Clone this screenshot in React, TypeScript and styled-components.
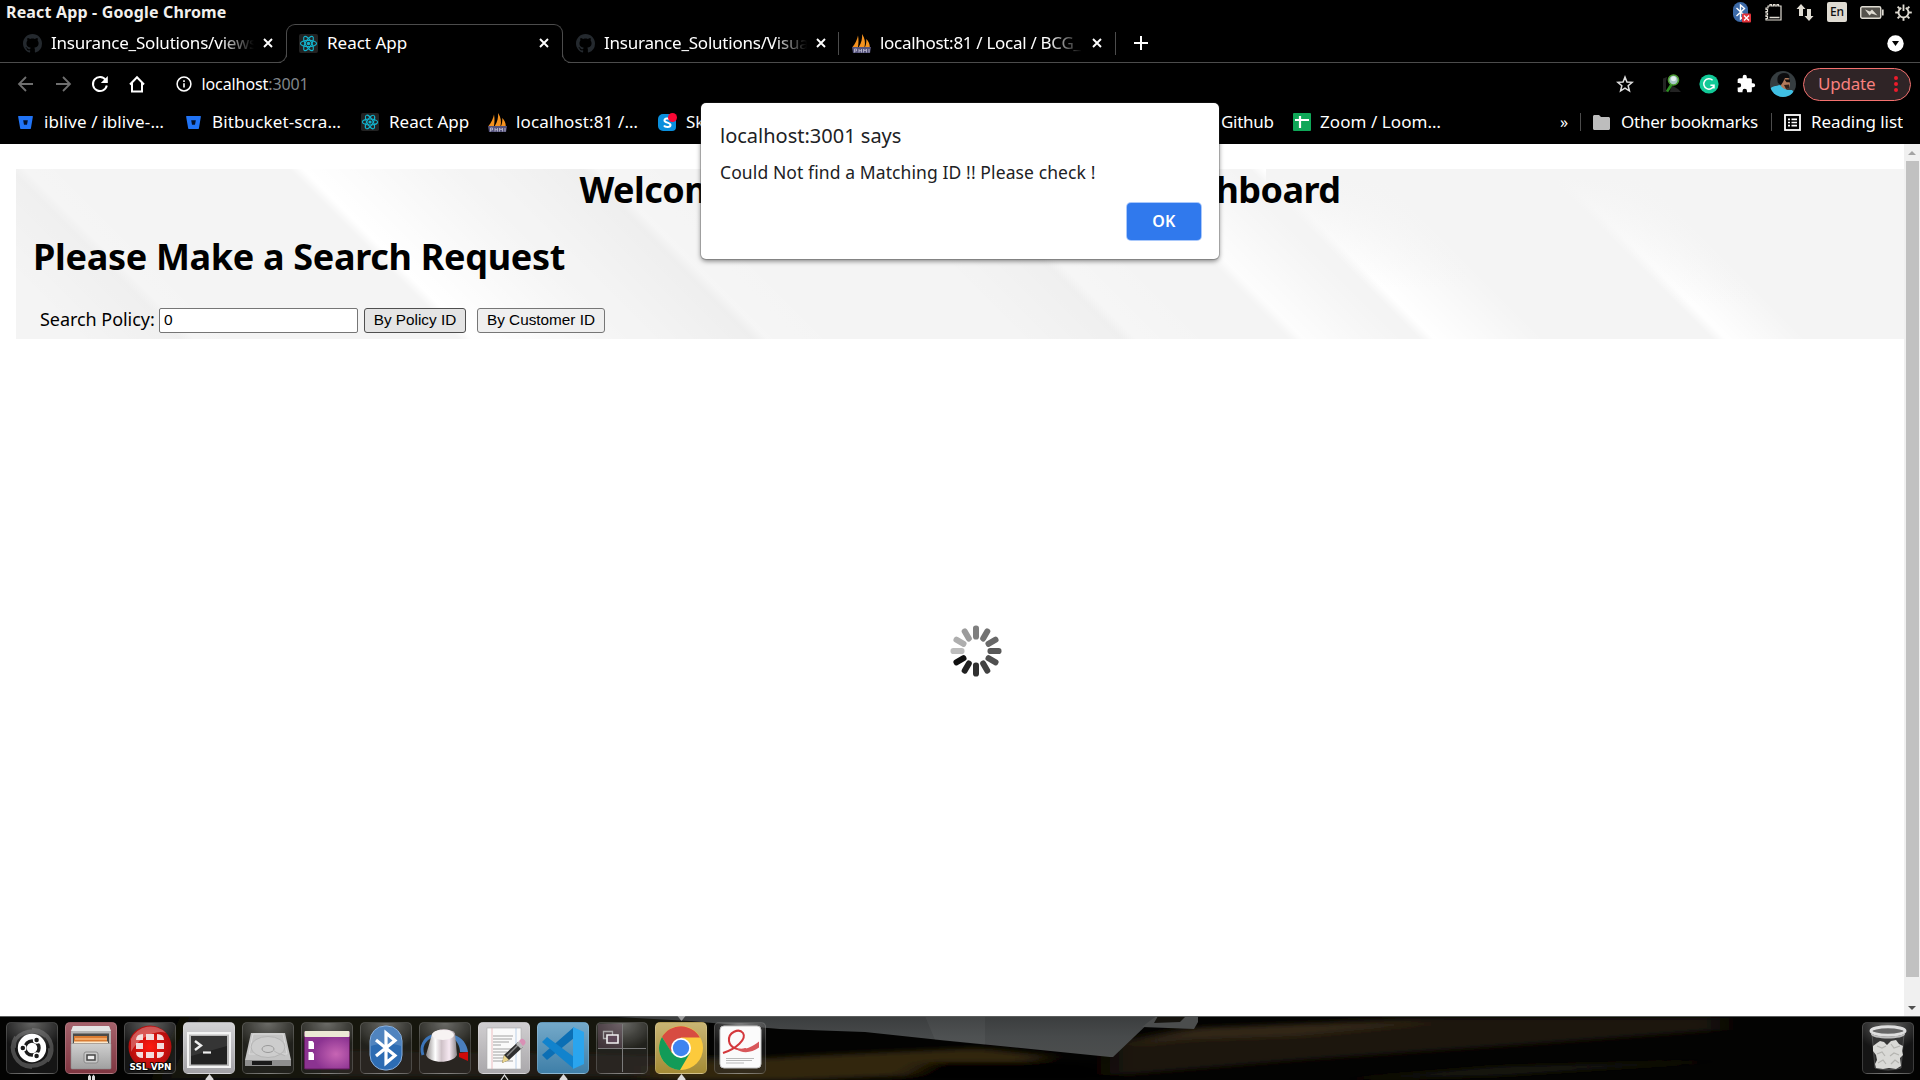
import React from "react";
import styled, { createGlobalStyle, css } from "styled-components";

const ui = `"Noto Sans", "Open Sans", sans-serif`;

const GlobalStyle = createGlobalStyle`
  *, *::before, *::after { box-sizing: border-box; }
  html, body { margin: 0; padding: 0; background: #fff; overflow: hidden; }
  svg { display: block; flex: none; }
  button, input { margin: 0; }
`;

/* ---------- shell ---------- */

const Desktop = styled.div`
  position: relative;
  display: flex;
  flex-direction: column;
  width: 1920px;
  height: 1080px;
  overflow: hidden;
  font-family: ${ui};
  color: #fff;
  background: #000;
`;

const Label = styled.span<{ $w?: number; $ls?: number; $size?: number; $fade?: boolean; $color?: string }>`
  flex: none;
  display: block;
  white-space: nowrap;
  overflow: hidden;
  line-height: 26px;
  font-size: ${(p) => p.$size ?? 17}px;
  letter-spacing: ${(p) => p.$ls ?? 0}px;
  color: ${(p) => p.$color ?? "inherit"};
  ${(p) => p.$w && css`width: ${p.$w}px;`}
  ${(p) => p.$fade && css`
    mask-image: linear-gradient(to right, #000 calc(100% - 34px), transparent);
  `}
`;

const SystemBar = styled.header`
  flex: none;
  display: flex;
  align-items: center;
  justify-content: space-between;
  height: 24px;
  padding: 0 4px 0 6px;
`;

const WindowTitle = styled.span`
  font-size: 16px;
  font-weight: 700;
  letter-spacing: 0.16px;
  line-height: 24px;
  white-space: nowrap;
  color: #f2f0ed;
`;

const Tray = styled.div`
  display: flex;
  align-items: center;
`;

const TrayItem = styled.div<{ $w: number }>`
  display: flex;
  justify-content: center;
  width: ${(p) => p.$w}px;
`;

const Lang = styled.span`
  width: 20px;
  height: 20px;
  border-radius: 2px;
  background: #dfdbd2;
  color: #111;
  font-size: 12px;
  line-height: 20px;
  text-align: center;
  font-weight: 500;
`;

/* ---------- tabs ---------- */

const TabStrip = styled.div`
  flex: none;
  display: flex;
  height: 39px;
`;

const Tab = styled.div<{ $w: number; $pl: number }>`
  flex: none;
  display: flex;
  align-items: center;
  width: ${(p) => p.$w}px;
  padding-left: ${(p) => p.$pl}px;
  border-bottom: 1px solid #4c4c4c;
`;

const ActiveTab = styled(Tab)`
  position: relative;
  padding-bottom: 2px;
  border: 1px solid #4c4c4c;
  border-bottom: 0;
  border-radius: 9px 9px 0 0;
  &::before, &::after {
    content: "";
    position: absolute;
    bottom: 0;
    width: 10px;
    height: 10px;
    border-bottom: 1px solid #4c4c4c;
  }
  &::before {
    left: -10px;
    border-right: 1px solid #4c4c4c;
    border-bottom-right-radius: 9px;
    box-shadow: 4px 4px 0 #000;
  }
  &::after {
    right: -10px;
    border-left: 1px solid #4c4c4c;
    border-bottom-left-radius: 9px;
    box-shadow: -4px 4px 0 #000;
  }
`;

const Favicon = styled.span<{ $mr?: number }>`
  flex: none;
  margin-right: ${(p) => p.$mr ?? 9}px;
`;

const TabClose = styled.span<{ $ml: number }>`
  flex: none;
  margin-left: ${(p) => p.$ml}px;
`;

const Divider = styled.i<{ $h?: number; $ml?: number; $mr?: number }>`
  flex: none;
  width: 1px;
  height: ${(p) => p.$h ?? 20}px;
  margin: 0 ${(p) => p.$mr ?? 0}px 0 ${(p) => p.$ml ?? 0}px;
  background: #4c4c4c;
`;

const StripEnd = styled.div`
  flex: 1;
  display: flex;
  align-items: center;
  justify-content: space-between;
  padding: 0 16px 0 17px;
  border-bottom: 1px solid #4c4c4c;
`;

/* ---------- toolbar ---------- */

const Toolbar = styled.div`
  flex: none;
  display: flex;
  align-items: center;
  height: 43px;
  padding: 0 9px 1px 16px;
`;

const NavButtons = styled.div`
  display: flex;
  align-items: center;
  gap: 18.500px;
`;

const Address = styled.div`
  flex: 1;
  display: flex;
  align-items: center;
  padding-left: 30px;
  font-size: 16px;
  letter-spacing: -0.1px;
  line-height: 26px;
  svg { margin-right: 10px; }
`;

const Port = styled.span`
  color: #80868b;
`;

const Extensions = styled.div`
  display: flex;
  align-items: center;
`;

const Slot = styled.div<{ $w: number }>`
  display: flex;
  justify-content: center;
  width: ${(p) => p.$w}px;
`;

const UpdatePill = styled.div`
  display: flex;
  align-items: center;
  width: 108px;
  height: 33px;
  margin-left: 2px;
  padding-left: 14px;
  border: 1px solid #f4716f;
  border-radius: 17px;
  background: #2f2426;
  svg { margin-left: 14px; }
`;

/* ---------- bookmarks ---------- */

const Bookmarks = styled.div`
  flex: none;
  display: flex;
  align-items: center;
  height: 38px;
  padding: 0 0 6px 18px;
`;

const Bookmark = styled.div<{ $w: number; $gap?: number }>`
  flex: none;
  display: flex;
  align-items: center;
  gap: ${(p) => p.$gap ?? 9}px;
  width: ${(p) => p.$w}px;
`;

/* ---------- page ---------- */

const Viewport = styled.div`
  flex: none;
  display: flex;
  height: 872px;
  background: #fff;
  color: #000;
`;

const Page = styled.main`
  flex: 1;
  display: flex;
  flex-direction: column;
  padding: 25px 0 0 16px;
`;

const streak = (u: number, glow: string, dark: string, spread: number) => {
  const at = (x: number) => ((x / 2058) * 100).toFixed(2) + "%";
  return `linear-gradient(45deg, rgba(0,0,0,0) ${at(u - 110)}, ${dark} ${at(u - 5)}, ${glow} ${at(u + 9)}, rgba(255,255,255,0) ${at(u + spread)})`;
};

const Banner = styled.section`
  flex: none;
  height: 170px;
  background:
    ${streak(170, "rgba(255,255,255,.1)", "rgba(0,0,0,.018)", 60)},
    ${streak(448, "rgba(255,255,255,1)", "rgba(0,0,0,0)", 170)},
    ${streak(742, "rgba(255,255,255,.15)", "rgba(0,0,0,.022)", 90)},
    ${streak(1111, "rgba(255,255,255,.2)", "rgba(0,0,0,.018)", 90)},
    ${streak(1278, "rgba(255,255,255,.8)", "rgba(0,0,0,0)", 110)},
    linear-gradient(to bottom, #f4f4f4 5%, rgba(244,244,244,0) 70%) 1250px 0 / 200px 170px no-repeat,
    ${streak(1409, "rgba(255,255,255,1)", "rgba(0,0,0,0)", 120)},
    linear-gradient(to bottom, #f4f4f4 5%, rgba(244,244,244,0) 80%) 1500px 0 / 240px 170px no-repeat,
    ${streak(1701, "rgba(255,255,255,.95)", "rgba(0,0,0,0)", 90)},
    #f4f4f4;
`;

const Heading = styled.h1<{ $center?: boolean; $ls: number }>`
  margin: ${(p) => (p.$center ? "0" : "28px 0 0 17px")};
  font-size: 36px;
  font-weight: 700;
  line-height: 39px;
  letter-spacing: ${(p) => p.$ls}px;
  white-space: nowrap;
  text-align: ${(p) => (p.$center ? "center" : "left")};
  &:first-child { padding-top: 1px; }
`;

const SearchRow = styled.form`
  display: flex;
  align-items: center;
  height: 26px;
  margin-top: 31px;
  padding-left: 24px;
`;

const SearchLabel = styled.label`
  width: 119px;
  font-size: 18px;
  line-height: 22px;
  letter-spacing: -0.05px;
  white-space: nowrap;
  padding-bottom: 3px;
`;

const SearchInput = styled.input`
  width: 199px;
  height: 25px;
  padding: 1px 4px;
  border: 1px solid #767676;
  border-radius: 2px;
  outline: 0;
  background: #fff;
  color: #000;
  font: 15.5px "Liberation Sans", Arial, sans-serif;
`;

const SearchButton = styled.button<{ $w: number; $ml: number; $pressed?: boolean }>`
  width: ${(p) => p.$w}px;
  height: 25px;
  margin-left: ${(p) => p.$ml}px;
  padding: 0;
  border: 1px solid ${(p) => (p.$pressed ? "#4f4f4f" : "#767676")};
  border-radius: 3px;
  background: ${(p) => (p.$pressed ? "#e4e4e4" : "#efefef")};
  color: #000;
  font: 15.3px "Liberation Sans", Arial, sans-serif;
  white-space: nowrap;
`;

const Loading = styled.div`
  flex: 1;
  display: flex;
  justify-content: center;
  padding: 286px 0 0 32px;
`;

const Scrollbar = styled.div`
  flex: none;
  display: flex;
  flex-direction: column;
  align-items: center;
  justify-content: space-between;
  width: 16px;
  padding: 7px 0 6px;
  background: #f0f0f0;
`;

const Thumb = styled.div`
  width: 13px;
  height: 816px;
  margin: 6px 0 auto 1px;
  background: #c1c1c1;
`;

/* ---------- alert ---------- */

const Alert = styled.div`
  position: absolute;
  left: 701px;
  top: 103px;
  display: flex;
  flex-direction: column;
  width: 518px;
  height: 156px;
  padding: 19px 18px 18px 19px;
  border-radius: 5px;
  background: #fff;
  color: #202124;
  box-shadow: 0 0 0 1px rgba(60, 60, 60, 0.25), 0 2px 5px rgba(0, 0, 0, 0.5);
`;

const AlertTitle = styled.div`
  font-size: 20px;
  line-height: 28px;
`;

const AlertText = styled.div`
  margin-top: 8px;
  font-size: 17.5px;
  letter-spacing: 0.1px;
  line-height: 28px;
`;

const OkButton = styled.button`
  align-self: flex-end;
  width: 74px;
  height: 37px;
  margin-top: 17px;
  padding: 0 0 1px;
  border: 0;
  border-radius: 4px;
  background: #3079ed;
  box-shadow: 0 0 0 1px #a9c8fb;
  color: #fff;
  font: 600 16px ${ui};
  letter-spacing: 0.4px;
`;

/* ---------- dock ---------- */

const Dock = styled.footer`
  position: relative;
  flex: none;
  display: flex;
  align-items: flex-start;
  gap: 7px;
  height: 64px;
  padding: 6px 6px 0;
  overflow: hidden;
  background: #030302;
`;

const Wallpaper = styled.svg`
  position: absolute;
  inset: 0;
`;

const Tile = styled.div<{ $bg?: string; $last?: boolean }>`
  position: relative;
  flex: none;
  width: 52px;
  height: 52px;
  border: 1px solid rgba(255, 255, 255, 0.17);
  border-radius: 5px;
  background: ${(p) => p.$bg ?? "radial-gradient(ellipse 70% 55% at 50% 0, rgba(255,255,255,.36), rgba(255,255,255,.04)), rgba(30,30,28,.35)"};
  ${(p) => p.$last && css`margin-left: auto;`}
  & > svg { margin: -1px; }
`;

const Marker = styled.span<{ $top?: boolean }>`
  position: absolute;
  left: 21px;
  ${(p) => (p.$top ? "top: -8px; transform: rotate(180deg);" : "top: 51px;")}
  svg { opacity: ${(p) => (p.$top ? 0.6 : 1)}; }
`;

const Arrow = ({ top, kind = "solid" }: { top?: boolean; kind?: "solid" | "hollow" | "twin" }) => (
  <Marker $top={top}>
    <svg width="9" height="6" viewBox="0 0 9 6">
      {kind === "solid" && <path d="M4.5 0 8.5 5v1h-8V5Z" fill="#d9d9d9" />}
      {kind === "hollow" && <path d="M1 6 4.500 1 8 6" fill="none" stroke="#d9d9d9" strokeWidth="1.300" />}
      {kind === "twin" && <path d="M1 6V2.500L2.500.500 4 2.500V6ZM5 6V2.500L6.500.500 8 2.500V6Z" fill="#d9d9d9" />}
    </svg>
  </Marker>
);

/* ---------- icons ---------- */

const GithubIcon = () => (
  <svg width="19" height="19" viewBox="0 0 16 16">
    <path fill="#24292e" d="M8 0C3.580 0 0 3.580 0 8c0 3.540 2.290 6.530 5.470 7.590.4.070.55-.17.55-.38 0-.19-.010-.82-.010-1.490-2.010.37-2.530-.49-2.690-.94-.09-.23-.48-.94-.82-1.130-.28-.15-.68-.52-.010-.53.63-.010 1.080.58 1.230.82.72 1.210 1.870.87 2.330.66.070-.52.28-.87.51-1.070-1.780-.2-3.640-.89-3.640-3.950 0-.87.31-1.590.82-2.150-.080-.2-.36-1.020.080-2.120 0 0 .67-.21 2.200.82.64-.18 1.320-.27 2-.27s1.360.09 2 .27c1.530-1.040 2.200-.82 2.200-.82.44 1.100.16 1.920.080 2.120.51.56.82 1.270.82 2.150 0 3.070-1.870 3.750-3.650 3.950.29.25.54.73.54 1.480 0 1.070-.010 1.930-.010 2.200 0 .21.15.46.55.38A8.010 8.010 0 0 0 16 8c0-4.420-3.580-8-8-8Z" />
  </svg>
);

const ReactIcon = ({ size = 19 }: { size?: number }) => (
  <svg width={size} height={size} viewBox="0 0 20 20">
    <rect width="20" height="20" rx="2" fill="#222" />
    <g fill="none" stroke="#12b3cd" strokeWidth="1.200">
      <ellipse cx="10" cy="10" rx="8.500" ry="3.300" />
      <ellipse cx="10" cy="10" rx="8.500" ry="3.300" transform="rotate(60 10 10)" />
      <ellipse cx="10" cy="10" rx="8.500" ry="3.300" transform="rotate(120 10 10)" />
    </g>
    <circle cx="10" cy="10" r="1.800" fill="#12b3cd" />
  </svg>
);

const SailIcon = () => (
  <svg width="19" height="19" viewBox="0 0 19 19">
    <path d="M.5 13C3 10 5.500 5 6 1.500c.8 4 .6 8 0 11.500ZM6.800 13C9.500 9 10.500 4 10 0c3 4 3.500 9 2.500 13ZM13 13c1-2 1.500-4.500 1.300-8 2.200 2 3.500 5 3.500 8Z" fill="#f5921f" />
    <path d="M0 13h19l-1 6H1Z" fill="#55537c" />
    <path d="M2.500 18.500V15h2v2h-2M7 18.500V15M7 16.700h2.500m0-1.700v3.500M11.500 18.500V15l1.500 2 1.500-2v3.500m2.500 0V15" stroke="#b9b7cc" strokeWidth=".9" fill="none" />
  </svg>
);

const BitbucketIcon = () => (
  <svg width="15" height="15" viewBox="0 0 15 15">
    <path d="M.6 1h13.800c.3 0 .5.3.5.6l-2 12c0 .3-.3.500-.6.500H2.800c-.3 0-.6-.2-.6-.500L.1 1.600C0 1.300.3 1 .6 1Z" fill="#2174f6" />
    <path d="M5.200 5.300h4.600l-.8 4.500H6Z" fill="#03102a" />
  </svg>
);

const SkypeIcon = () => (
  <svg width="19" height="19" viewBox="0 0 19 19">
    <path d="M5 1h9a4 4 0 0 1 4 4v9a4 4 0 0 1-4 4H5a5 5 0 0 1-5-5V6a5 5 0 0 1 5-5Z" fill="#0a8fdd" />
    <path d="M12 6.500C11 5 6.500 5 6.500 7.500S12.500 9.300 12.500 12 7 14.500 6 12.500" fill="none" stroke="#fff" strokeWidth="2" />
    <circle cx="14.500" cy="4.500" r="4.500" fill="#fb0734" />
  </svg>
);

const SheetsIcon = () => (
  <svg width="18" height="18" viewBox="0 0 18 18">
    <rect width="18" height="18" rx="1" fill="#0fa758" />
    <path d="M2 7h14M7 3v12" stroke="#fff" strokeWidth="2.200" />
  </svg>
);

const CloseIcon = () => (
  <svg width="10" height="10" viewBox="0 0 10 10">
    <path d="m1 1 8 8M9 1 1 9" stroke="#fff" strokeWidth="1.900" />
  </svg>
);

const ArrowIcon = ({ flip }: { flip?: boolean }) => (
  <svg width="19" height="16" viewBox="0 0 19 16">
    <path d="M17 8H3m7-7L3 8l7 7" transform={flip ? "rotate(180 9.500 8)" : undefined} fill="none" stroke="#6f6f6f" strokeWidth="1.800" />
  </svg>
);

const ReloadIcon = () => (
  <svg width="18" height="18" viewBox="0 0 18 18">
    <path d="M14.700 5A7 7 0 1 0 15.800 10.500" fill="none" stroke="#fff" strokeWidth="2" />
    <path d="M16.800 1v7h-7Z" fill="#fff" />
  </svg>
);

const HomeIcon = () => (
  <svg width="18" height="18" viewBox="0 0 18 18">
    <path d="M2 9.500 9 2.300l7 7.200M4 8v8.500h10V8" fill="none" stroke="#fff" strokeWidth="2" />
  </svg>
);

const InfoIcon = () => (
  <svg width="16" height="16" viewBox="0 0 16 16">
    <circle cx="8" cy="8" r="6.900" fill="none" stroke="#fff" strokeWidth="1.500" />
    <path d="M8 7.300v4.300M8 4.300v1.600" stroke="#fff" strokeWidth="1.600" />
  </svg>
);

const StarIcon = () => (
  <svg width="18" height="18" viewBox="0 0 24 24">
    <path d="m12 2.800 2.600 6.500 7 .5-5.400 4.500 1.700 6.800-5.900-3.700-5.900 3.700 1.700-6.800L2.400 9.800l7-.5Z" fill="none" stroke="#dedede" strokeWidth="2" />
  </svg>
);

const LensIcon = () => (
  <svg width="20" height="20" viewBox="0 0 20 20">
    <path d="M1 4.500 5 3l-1 4v10l3 1H1ZM9 11l7 4 3 3H8Z" fill="#232323" />
    <path d="m9.500 10.500-4.500 7" stroke="#2c8f22" strokeWidth="2.600" />
    <circle cx="11.500" cy="6" r="5" fill="#a9c6c8" stroke="#4c9b34" strokeWidth="1.600" />
    <circle cx="11.500" cy="4.700" r="2.500" fill="#e3f0f0" />
  </svg>
);

const GrammarlyIcon = () => (
  <svg width="20" height="20" viewBox="0 0 20 20">
    <circle cx="10" cy="10" r="9.600" fill="#11c997" />
    <path d="M13.600 6.200A5.200 5.200 0 1 0 15 11.200h-3.600M15 11v3.500" fill="none" stroke="#fff" strokeWidth="1.500" />
  </svg>
);

const PuzzleIcon = () => (
  <svg width="20" height="20" viewBox="0 0 24 24">
    <path fill="#fff" d="M20.500 11H19V7c0-1.100-.9-2-2-2h-4V3.500a2.500 2.500 0 0 0-5 0V5H4c-1.100 0-2 .9-2 2v3.800h1.500a2.700 2.700 0 0 1 0 5.400H2V20c0 1.100.9 2 2 2h3.800v-1.500a2.700 2.700 0 0 1 5.400 0V22H17c1.100 0 2-.9 2-2v-4h1.500a2.500 2.500 0 0 0 0-5Z" />
  </svg>
);

const Avatar = () => (
  <svg width="26" height="26" viewBox="0 0 26 26">
    <defs><clipPath id="face"><circle cx="13" cy="13" r="13" /></clipPath></defs>
    <g clipPath="url(#face)">
      <rect width="26" height="26" fill="#363d40" />
      <path d="M0 26V18c2-3 6-3 10-4l7 5 5 0c2 2 3 4 3 7Z" fill="#3fbfe3" />
      <path d="M11 7c2-4 8-3 8 2l1 4-1 4c-2 2-5 2-8-2Z" fill="#b27a5b" />
      <path d="M8 12C6 6 9 2 14 2c4 0 6 2 5.500 5L15 7l-2 4-2 3Z" fill="#0c0c0e" />
      <path d="M14.500 8.500H20v2.800h-3.500Z" fill="#17110f" />
      <path d="m14 14 5-.5v4l-3 .5Z" fill="#332019" />
    </g>
  </svg>
);

const FolderIcon = () => (
  <svg width="17" height="15" viewBox="0 0 17 15">
    <path d="M0 1.500C0 .7.7 0 1.500 0H6l2 2h7.500c.8 0 1.500.7 1.500 1.500v10c0 .8-.7 1.500-1.500 1.500h-14C.7 15 0 14.300 0 13.500Z" fill="#bdbdbd" />
  </svg>
);

const ListIcon = () => (
  <svg width="17" height="17" viewBox="0 0 17 17">
    <rect x="1" y="1" width="15" height="15" fill="none" stroke="#fff" strokeWidth="1.800" />
    <path d="M4 5.300h2m1.500 0H13M4 8.500h2m1.500 0H13M4 11.700h2m1.500 0H13" stroke="#fff" strokeWidth="1.700" />
  </svg>
);

const Spinner = () => {
  const shades = ["#7f7f7f", "#727272", "#686868", "#585858", "#4f4f4f", "#424242", "#303030", "#202020", "#0f0f0f", "#bdbdbd", "#aeaeae", "#9b9b9b"];
  return (
    <svg width="52" height="52" viewBox="-26 -26 52 52">
      {shades.map((c, i) => (
        <rect key={i} x="-3" y="-25.500" width="6" height="14" rx="2.800" fill={c} transform={`rotate(${i * 30})`} />
      ))}
    </svg>
  );
};

/* ---------- dock artwork ---------- */

const art = { width: 52, height: 52, viewBox: "0 0 52 52" };

const UbuntuArt = () => (
  <svg {...art}>
    <path d="M8 26C6 12 26 4 40 14M26 8c16-1 26 18 15 31M44 26c2 14-14 22-30 15M26 45C10 44 2 28 10 15" fill="none" stroke="#8c8c8c" strokeWidth="4" opacity=".45" />
    <circle cx="26" cy="26" r="14.200" fill="#fff" />
    <circle cx="26" cy="26" r="7" fill="none" stroke="#1c1c1c" strokeWidth="3.400" />
    <g stroke="#fff" strokeWidth="1.500">
      <circle cx="16.800" cy="26" r="3" fill="#1c1c1c" />
      <circle cx="30.600" cy="18" r="3" fill="#1c1c1c" />
      <circle cx="30.600" cy="34" r="3" fill="#1c1c1c" />
    </g>
  </svg>
);

const FilesArt = () => (
  <svg {...art}>
    <defs><linearGradient id="cab" x2="0" y2="1"><stop stopColor="#d0d0d0" /><stop offset="1" stopColor="#a0a0a0" /></linearGradient></defs>
    <path d="M8 4h36l2 6v36H6V10Z" fill="#b5b5b5" />
    <path d="M8 4h36l2 5H6Z" fill="#e4e4e4" />
    <rect x="8" y="11.500" width="36" height="10" fill="#4b4b49" />
    <path d="M9 14h33v8H9Z" fill="#d97b32" />
    <path d="M10 16h32v2H10Z" fill="#f2a764" />
    <path d="M9 19.500h34v2H9Z" fill="#fbe8cc" />
    <rect x="6" y="21.500" width="40" height="25.500" rx="1" fill="url(#cab)" stroke="#8d8d8d" strokeWidth=".6" />
    <rect x="19" y="30" width="14" height="11" rx="2" fill="#c9c9c9" stroke="#8a8a8a" />
    <rect x="22" y="33" width="8" height="5" fill="#eee" stroke="#444" strokeWidth="1.500" />
  </svg>
);

const VpnText = styled.text`
  font: 700 8px "DejaVu Sans", sans-serif;
  fill: #fff;
  stroke: #000;
  stroke-width: 1.6px;
  paint-order: stroke;
`;

const VpnArt = () => (
  <svg {...art}>
    <defs><radialGradient id="vpn"><stop stopColor="#ff1a10" /><stop offset="1" stopColor="#b20d0d" /></radialGradient></defs>
    <circle cx="26" cy="25" r="21.500" fill="url(#vpn)" />
    <path d="M7 17A21.500 21.500 0 0 1 42 11C32 7 14 16 7 30Z" fill="#fff" opacity=".3" />
    <g fill="#f3dcdc">
      <path d="M12 18q0-6 7-6v6ZM22 12h8v6h-8ZM33 12q7 0 7 6h-7Z" />
      <path d="M12 21h7v6h-7ZM33 21h7v6h-7ZM12 30h7v6q-7 0-7-6ZM22 30h8v6h-8ZM33 30h7q0 6-7 6Z" />
    </g>
    <VpnText x="5.500" y="47.500" textLength="42" lengthAdjust="spacingAndGlyphs">SSL VPN</VpnText>
  </svg>
);

const TerminalArt = () => (
  <svg {...art}>
    <rect x="4" y="10" width="44" height="36" fill="#f4f4f4" />
    <rect x="6" y="12.500" width="40" height="31.500" fill="#bbb" />
    <rect x="8" y="14" width="36" height="28.500" fill="#222" />
    <path d="M8 14h36v10L8 34Z" fill="#fff" opacity=".09" />
    <path d="m12 19 6 4.500-6 4.500" fill="none" stroke="#eee" strokeWidth="2.400" />
    <path d="M20 30.500h8" stroke="#eee" strokeWidth="2.200" />
  </svg>
);

const DiskArt = () => (
  <svg {...art}>
    <path d="M9 11h34l6 27H3Z" fill="#c4c4c4" />
    <path d="M3 38h46v6H3Z" fill="#8e8e8e" />
    <path d="M10 39h20v4H10Z" fill="#1a1a1a" />
    <path d="M11 12h30l4 20H7Z" fill="none" stroke="#e9e9e9" strokeWidth=".6" />
    <ellipse cx="26" cy="25" rx="17" ry="10.500" fill="#cdcdcd" stroke="#b4b4b4" />
    <ellipse cx="26" cy="27" rx="6" ry="3.500" fill="none" stroke="#999" />
    <path d="M31 28c6 5 10 4 12 6" fill="none" stroke="#b5b5b5" />
  </svg>
);

const DesktopArt = () => (
  <svg {...art}>
    <defs><radialGradient id="purple" cx=".7" cy=".6"><stop stopColor="#c765b4" /><stop offset="1" stopColor="#8b3391" /></radialGradient></defs>
    <rect x="3.500" y="10" width="45" height="37" rx="1" fill="url(#purple)" stroke="#631b5c" />
    <rect x="3.500" y="9" width="45" height="6" rx="1" fill="#ebe9d5" />
    <path d="M7.500 19h4l1.500 2v6H7.500ZM7.500 30h4l1.500 2v6H7.500Z" fill="#fff" />
  </svg>
);

const BluetoothArt = () => (
  <svg {...art}>
    <rect x="10" y="4" width="32" height="44" rx="15" fill="#2d6cb3" stroke="#8db1dc" strokeWidth="1" />
    <path d="M11 24c8-3 22-3 30 0V18C41 0 11 0 11 18Z" fill="#fff" opacity=".17" />
    <path d="m16 18 19 15.500L26 41V11l9 7.500L16 34" fill="none" stroke="#fff" strokeWidth="3.200" />
  </svg>
);

const KnobArt = () => (
  <svg {...art}>
    <defs><linearGradient id="knob"><stop stopColor="#8b8686" /><stop offset=".3" stopColor="#fff" /><stop offset=".5" stopColor="#cfc2c8" /><stop offset=".75" stopColor="#f7e9f2" /><stop offset="1" stopColor="#8a8488" /></linearGradient></defs>
    <path d="M4 33C1 25 5 17 13 14" fill="none" stroke="#3b74b8" strokeWidth="3" />
    <path d="M35 13c8 2 13 9 14 17h-8c0-6-3-11-7-14Z" fill="#4a7fbd" />
    <path d="m40 31 9-1v9l-9-4Z" fill="#cf0a0a" />
    <path d="M13 12C18 6 30 6 36 11l2 22c-4 9-28 9-31 0Z" fill="url(#knob)" />
    <ellipse cx="24" cy="13" rx="11" ry="5" fill="#f7f3f3" />
  </svg>
);

const EditorArt = () => (
  <svg {...art}>
    <rect x="9" y="6" width="34" height="41" fill="#fafafa" stroke="#aaa" strokeWidth=".6" />
    <path d="M14 6v41" stroke="#e7a3a8" strokeWidth=".7" /><path d="M38 6v41" stroke="#9dbde0" strokeWidth=".7" />
    <path d="M15 14h20M15 17h19M15 20h16M15 23h8M15 27h19M15 30h14M15 33h17M15 36h12M15 39h20" stroke="#a2a2a2" />
    <path d="m24 41 2-8 14-13 5 5-14 13Z" fill="#2f2f2f" />
    <path d="m29 34 12-12" stroke="#888" strokeWidth="1.500" />
    <path d="m24 41 2-8 5 5Z" fill="#ead58c" />
    <path d="m38 22 3-3 5 5-3 3Z" fill="#bbb" /><path d="m41 19 2-2c2-1 6 2 4 5l-2 2Z" fill="#d990b5" />
  </svg>
);

const CodeArt = () => (
  <svg {...art}>
    <path d="M5 33 37 5v11L10 38Z" fill="#0b6fb5" />
    <path d="M5 20 10 15l27 20v12L5 20Z" fill="#1183cd" />
    <path d="M36 5l11 5v32l-11 5Z" fill="#2aa5ee" />
  </svg>
);

const WorkspaceArt = () => (
  <svg {...art}>
    <rect x="2" y="2" width="24" height="24" fill="#74556a" opacity=".4" />
    <path d="M2 26.500h48M26.500 2v48" stroke="#7b7b7b" />
    <path d="M7.500 9.500h9v7h-9Z" fill="none" stroke="#aaa" strokeWidth="1.300" />
    <path d="M11 13h11v8H11Z" fill="#5d4857" stroke="#f0f0f0" strokeWidth="1.600" />
  </svg>
);

const ChromeArt = () => (
  <svg {...art}>
    <circle cx="26" cy="26" r="22" fill="#fcca3c" />
    <path d="M7 15A22 22 0 0 1 45 15.500H26L16 30Z" fill="#d74c41" />
    <path d="M7 15A22 22 0 0 0 25 48L35 31 26 36 17 31Z" fill="#129b58" />
    <circle cx="26" cy="26" r="10" fill="#fff" />
    <circle cx="26" cy="26" r="8.200" fill="#3f84f0" />
  </svg>
);

const ReaderArt = () => (
  <svg {...art}>
    <rect x="6" y="4" width="41" height="42" rx="4" fill="#fbfbfb" stroke="#c4c4c4" />
    <path d="M9 31C22 27 33 17 29 11c-4-5-15-1-14 8 1 7 10 10 17 8" fill="none" stroke="#d4383c" strokeWidth="2" />
    <path d="M22 26.500c9 2 15-1 23-7v6c-8 6-18 6-23 1Z" fill="#d8575a" />
    <path d="M12 36.500h28M12 38.500h26M12 41h18" stroke="#aaa" strokeWidth=".8" />
  </svg>
);

const TrashArt = () => (
  <svg {...art}>
    <path d="M10 12h32l-3 34q-13 4-26 0Z" fill="#3a3a3a" opacity=".65" stroke="#888" strokeWidth=".7" />
    <path d="m11 24 4-3 3-2 4 1 3 3 4-4 5-1 3 4 4 2-1 5 1 4-3 3 1 8-5 3-7-1-6 1-7-1-1-4 2-4-1-5-3-4Z" fill="#d9d9d6" />
    <path d="m15 24 5 2 4-2M29 22l3 4 6-2M15 32l5-2 3 4M28 34l4-3 5 2M16 41l5-3 3 4M29 42l4-4 4 3" fill="none" stroke="#b4b4b0" strokeWidth="1.200" />
    <ellipse cx="26" cy="9" rx="17" ry="4.200" fill="#666" stroke="#dedede" strokeWidth="3" />
    <path d="M9 10c0 6 34 6 34 0v2c0 6-34 6-34 0Z" fill="#bdbdbd" />
  </svg>
);

const DockBackdrop = () => (
  <Wallpaper width="1920" height="64" viewBox="0 0 1920 64">
    <defs>
      <filter id="soft" x="-10%" y="-80%" width="120%" height="260%"><feGaussianBlur stdDeviation="14 2.500" /></filter>
      <linearGradient id="paper" x2="0" y2="1"><stop stopColor="#3b3d3e" /><stop offset=".5" stopColor="#474a4b" /><stop offset="1" stopColor="#4c4e4e" /></linearGradient>
    </defs>
    <g filter="url(#soft)">
      <path d="M190 0H700V64H160Z" fill="#14120d" />
      <path d="M330 34 600 38 780 44V60H330Z" fill="#221d12" />
      <path d="M650 50 800 40 980 32 1050 40 1000 56 800 64H650Z" fill="#30260f" />
      <path d="M1110 60V26L1180 14 1400 2H1720V14L1560 26 1300 44Z" fill="#1b140a" />
      <path d="M1120 32 1180 24 1300 20 1440 6 1300 8 1190 12Z" fill="#302818" />
      <path d="M1330 64 1500 50 1740 44 1500 60Z" fill="#191408" />
      <path d="M930 46 1090 46 1120 64H900Z" fill="#050402" />
    </g>
    <path d="M600 0 690 5 780 13 865 16 940 24 1110 41 1113 41 1156 0Z" fill="url(#paper)" />
    <path d="m925 0 10 24 50 5V0Z" fill="#fff" opacity=".04" />
    <path d="M1156 0h42v6l-4 7-52-2Z" fill="#4b4d4d" />
    <path d="M1158 0h28l-6 6-26 1Z" fill="#15130e" />
    <path d="M0 .5h1920" stroke="#5b5d5d" />
  </Wallpaper>
);

export default function App() {
  return (
    <Desktop>
      <GlobalStyle />
      <SystemBar>
        <WindowTitle>React App - Google Chrome</WindowTitle>
        <Tray>
          <TrayItem $w={31}>
            <svg width="19" height="22" viewBox="0 0 19 22">
              <rect x="1" y="1" width="15" height="20" rx="7.500" fill="#3c6aa8" />
              <path d="m4.500 7 8 7.500L8.500 18V4l4 3.500-8 7.500" fill="none" stroke="#fff" strokeWidth="1.400" />
              <rect x="10" y="12.500" width="9" height="9" rx="1" fill="#e0323a" />
              <path d="m12 14.500 5 5m0-5-5 5" stroke="#fff" strokeWidth="1.400" />
            </svg>
          </TrayItem>
          <TrayItem $w={32}>
            <svg width="17" height="17" viewBox="0 0 17 17">
              <path d="M3 4V2h2V.700h1.500V2h2V.700H10V2h2V.700h1.500V2H16v14H1v-1.500h1.500v-2H1V11h1.500V9H1V7.500h1.500v-2H1V4Z" fill="none" stroke="#dfdbd2" strokeWidth="1.200" />
              <path d="M4.500 13.500h10" stroke="#dfdbd2" strokeWidth="1.500" />
            </svg>
          </TrayItem>
          <TrayItem $w={32}>
            <svg width="18" height="17" viewBox="0 0 18 17">
              <path d="M5 0 9.500 5H7v7H3V5H.500ZM13 17 8.500 12H11V5h4v7h2.500Z" fill="#dfdbd2" />
            </svg>
          </TrayItem>
          <TrayItem $w={32}><Lang>En</Lang></TrayItem>
          <TrayItem $w={38}>
            <svg width="24" height="13" viewBox="0 0 24 13">
              <rect x=".75" y=".75" width="20" height="11.500" rx="1.500" fill="#55524c" stroke="#dfdbd2" strokeWidth="1.400" />
              <path d="M22.800 3.500v6" stroke="#dfdbd2" strokeWidth="1.700" />
              <path d="m5 3.500 5 2 2-2 5.500 6-6-2-2 2Z" fill="#dfdbd2" />
            </svg>
          </TrayItem>
          <TrayItem $w={25}>
            <svg width="17" height="17" viewBox="-8.500 -8.500 17 17">
              <path d="M-2.200-4.600A5 5 0 1 0 2.200-4.600" fill="none" stroke="#dfdbd2" strokeWidth="1.800" />
              <path d="M0-8V-1.500" stroke="#dfdbd2" strokeWidth="1.800" />
              {[45, 90, 135, 180, 225, 270, 315].map((a) => (
                <path key={a} d="M0-5.500V-8.300" stroke="#dfdbd2" strokeWidth="1.900" transform={`rotate(${a})`} />
              ))}
            </svg>
          </TrayItem>
        </Tray>
      </SystemBar>

      <TabStrip>
        <Tab $w={286} $pl={23}>
          <Favicon><GithubIcon /></Favicon>
          <Label $w={203} $ls={-0.2} $fade>Insurance_Solutions/views</Label>
          <TabClose $ml={9}><CloseIcon /></TabClose>
        </Tab>
        <ActiveTab $w={277} $pl={12}>
          <Favicon $mr={9}><ReactIcon /></Favicon>
          <Label $w={203}>React App</Label>
          <TabClose $ml={9}><CloseIcon /></TabClose>
        </ActiveTab>
        <Tab $w={276} $pl={13}>
          <Favicon><GithubIcon /></Favicon>
          <Label $w={203} $ls={-0.22} $fade>Insurance_Solutions/Visual</Label>
          <TabClose $ml={9}><CloseIcon /></TabClose>
          <Divider $h={23} $ml={12} />
        </Tab>
        <Tab $w={278} $pl={13}>
          <Favicon $mr={9}><SailIcon /></Favicon>
          <Label $w={202} $ls={-0.3} $fade>localhost:81 / Local / BCG_</Label>
          <TabClose $ml={10}><CloseIcon /></TabClose>
          <Divider $h={23} $ml={13} />
        </Tab>
        <StripEnd>
          <svg width="14" height="14" viewBox="0 0 14 14"><path d="M7 0v14M0 7h14" stroke="#fff" strokeWidth="2" /></svg>
          <svg width="17" height="17" viewBox="0 0 17 17"><circle cx="8.500" cy="8.500" r="8.200" fill="#fff" /><path d="M5 6h7l-3.500 5Z" fill="#000" /></svg>
        </StripEnd>
      </TabStrip>

      <Toolbar>
        <NavButtons>
          <ArrowIcon />
          <ArrowIcon flip />
          <ReloadIcon />
          <HomeIcon />
        </NavButtons>
        <Address>
          <InfoIcon />
          <span>localhost<Port>:3001</Port></span>
        </Address>
        <Extensions>
          <Slot $w={58}><StarIcon /></Slot>
          <Slot $w={36}><LensIcon /></Slot>
          <Slot $w={38}><GrammarlyIcon /></Slot>
          <Slot $w={36}><PuzzleIcon /></Slot>
          <Slot $w={37}><Avatar /></Slot>
          <UpdatePill>
            <Label $w={62} $ls={-0.2} $color="#f8807e">Update</Label>
            <svg width="4" height="16" viewBox="0 0 4 16"><path d="M2 0a2 2 0 1 1 0 4 2 2 0 0 1 0-4Zm0 6a2 2 0 1 1 0 4 2 2 0 0 1 0-4Zm0 6a2 2 0 1 1 0 4 2 2 0 0 1 0-4Z" fill="#ee1b2b" /></svg>
          </UpdatePill>
        </Extensions>
      </Toolbar>

      <Bookmarks>
        <Bookmark $w={168} $gap={11}><BitbucketIcon /><Label $ls={0.13}>iblive / iblive-…</Label></Bookmark>
        <Bookmark $w={175} $gap={11}><BitbucketIcon /><Label $ls={0.14}>Bitbucket-scra…</Label></Bookmark>
        <Bookmark $w={127} $gap={10}><ReactIcon size={18} /><Label>React App</Label></Bookmark>
        <Bookmark $w={170}><SailIcon /><Label $ls={0.13}>localhost:81 /…</Label></Bookmark>
        <Bookmark $w={563}><SkypeIcon /><Label $w={17}>Skype</Label></Bookmark>
        <Bookmark $w={72}><Label $ls={-0.3}>Github</Label></Bookmark>
        <Bookmark $w={267}><SheetsIcon /><Label $ls={0.07}>Zoom / Loom…</Label></Bookmark>
        <Bookmark $w={20}><Label $size={16}>»</Label></Bookmark>
        <Divider $h={18} $mr={12} />
        <Bookmark $w={178} $gap={11}><FolderIcon /><Label $ls={-0.25}>Other bookmarks</Label></Bookmark>
        <Divider $h={18} $mr={12} />
        <Bookmark $w={120} $gap={10}><ListIcon /><Label $ls={-0.08}>Reading list</Label></Bookmark>
      </Bookmarks>

      <Viewport>
        <Page>
          <Banner>
            <Heading $center $ls={-0.54}>Welcome To Insurance Solutions Dashboard</Heading>
            <Heading $ls={-0.31}>Please Make a Search Request</Heading>
            <SearchRow>
              <SearchLabel>Search Policy:</SearchLabel>
              <SearchInput defaultValue="0" />
              <SearchButton type="button" $w={102} $ml={6} $pressed>By Policy ID</SearchButton>
              <SearchButton type="button" $w={128} $ml={11}>By Customer ID</SearchButton>
            </SearchRow>
          </Banner>
          <Loading><Spinner /></Loading>
        </Page>
        <Scrollbar>
          <svg width="8" height="4" viewBox="0 0 8 4"><path d="m4 0 4 4H0Z" fill="#a3a3a3" /></svg>
          <Thumb />
          <svg width="8" height="4" viewBox="0 0 8 4"><path d="M0 0h8L4 4Z" fill="#505050" /></svg>
        </Scrollbar>
      </Viewport>

      <Dock>
        <DockBackdrop />
        <Tile><UbuntuArt /></Tile>
        <Tile $bg="linear-gradient(#a4626b, #7f3540)"><FilesArt /><Arrow kind="twin" /></Tile>
        <Tile><VpnArt /></Tile>
        <Tile $bg="linear-gradient(#d2d2d4, #a3a2a6)"><TerminalArt /><Arrow /></Tile>
        <Tile><DiskArt /></Tile>
        <Tile><DesktopArt /></Tile>
        <Tile><BluetoothArt /></Tile>
        <Tile><KnobArt /></Tile>
        <Tile $bg="linear-gradient(#d0ced0, #aaa8ab)"><EditorArt /><Arrow kind="hollow" /></Tile>
        <Tile $bg="linear-gradient(#74a9c9, #3f7fa8)"><CodeArt /><Arrow /></Tile>
        <Tile><WorkspaceArt /></Tile>
        <Tile $bg="linear-gradient(#c9b574, #a48b35)"><Arrow top /><ChromeArt /><Arrow /></Tile>
        <Tile><ReaderArt /></Tile>
        <Tile $last><TrashArt /></Tile>
      </Dock>

      <Alert role="alertdialog">
        <AlertTitle>localhost:3001 says</AlertTitle>
        <AlertText>Could Not find a Matching ID !! Please check !</AlertText>
        <OkButton>OK</OkButton>
      </Alert>
    </Desktop>
  );
}
